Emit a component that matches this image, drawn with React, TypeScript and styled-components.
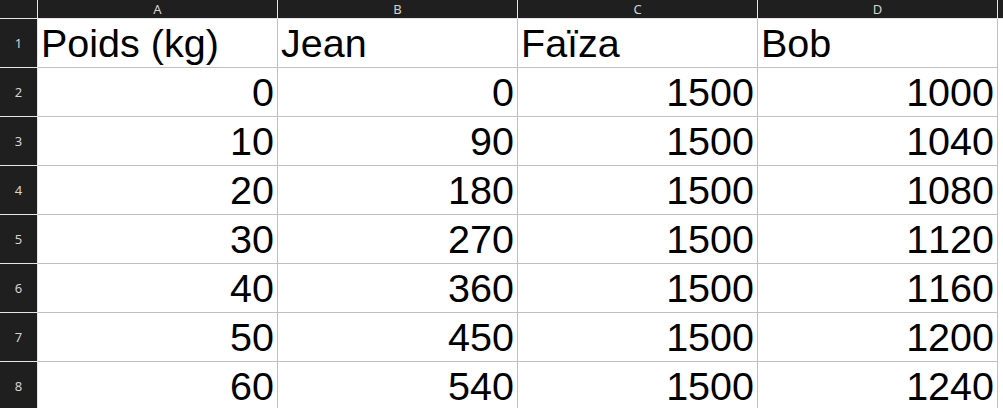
import React from "react";
import styled, { createGlobalStyle } from "styled-components";

const Global = createGlobalStyle`
  html, body { margin: 0; padding: 0; background: #ffffff; overflow: hidden; }
`;

const HEADER_BG = "#1f1f1f";
const HEADER_LINE = "#e6e6e6";
const GRID_LINE = "#c0c0c0";

const Sheet = styled.div`
  display: grid;
  grid-template-columns: 38px repeat(4, 240px) 240px;
  grid-auto-rows: 49px;
  grid-template-rows: 19px;
  width: 1003px;
  height: 408px;
  overflow: hidden;
`;

const ColHead = styled.div`
  box-sizing: border-box;
  background: ${HEADER_BG};
  border-right: 1px solid ${HEADER_LINE};
  border-bottom: 1px solid ${HEADER_LINE};
  color: #d4d4d4;
  font-family: "Noto Sans", "Open Sans", sans-serif;
  font-size: 13px;
  line-height: 18px;
  text-align: center;
`;

const RowHead = styled.div`
  box-sizing: border-box;
  background: ${HEADER_BG};
  border-right: 1px solid ${HEADER_LINE};
  border-bottom: 1px solid ${HEADER_LINE};
  color: #d4d4d4;
  font-family: "Noto Sans", "Open Sans", sans-serif;
  font-size: 13px;
  display: flex;
  align-items: center;
  justify-content: center;
`;

const Cell = styled.div<{ $num?: boolean }>`
  box-sizing: border-box;
  border-right: 1px solid ${GRID_LINE};
  border-bottom: 1px solid ${GRID_LINE};
  background: #ffffff;
  color: #000000;
  font-family: "Liberation Sans", Arial, sans-serif;
  font-size: 39.5px;
  font-kerning: none;
  font-variant-numeric: tabular-nums;
  display: flex;
  align-items: flex-end;
  justify-content: ${(p) => (p.$num ? "flex-end" : "flex-start")};
  padding: 0 3px 1px 3px;
  white-space: nowrap;
  overflow: hidden;
`;

const EmptyCell = styled.div`
  background: #ffffff;
`;

const cols = ["A", "B", "C", "D"];
const header = ["Poids (kg)", "Jean", "Faïza", "Bob"];
const data = [
  [0, 0, 1500, 1000],
  [10, 90, 1500, 1040],
  [20, 180, 1500, 1080],
  [30, 270, 1500, 1120],
  [40, 360, 1500, 1160],
  [50, 450, 1500, 1200],
  [60, 540, 1500, 1240],
];

export default function App() {
  return (
    <>
      <Global />
      <Sheet>
        <ColHead />
        {cols.map((c) => (
          <ColHead key={c}>{c}</ColHead>
        ))}
        <ColHead />
        <RowHead>1</RowHead>
        {header.map((h) => (
          <Cell key={h}>{h}</Cell>
        ))}
        <EmptyCell />
        {data.map((row, i) => (
          <React.Fragment key={i}>
            <RowHead>{i + 2}</RowHead>
            {row.map((v, j) => (
              <Cell key={j} $num>
                {v}
              </Cell>
            ))}
            <EmptyCell />
          </React.Fragment>
        ))}
      </Sheet>
    </>
  );
}
